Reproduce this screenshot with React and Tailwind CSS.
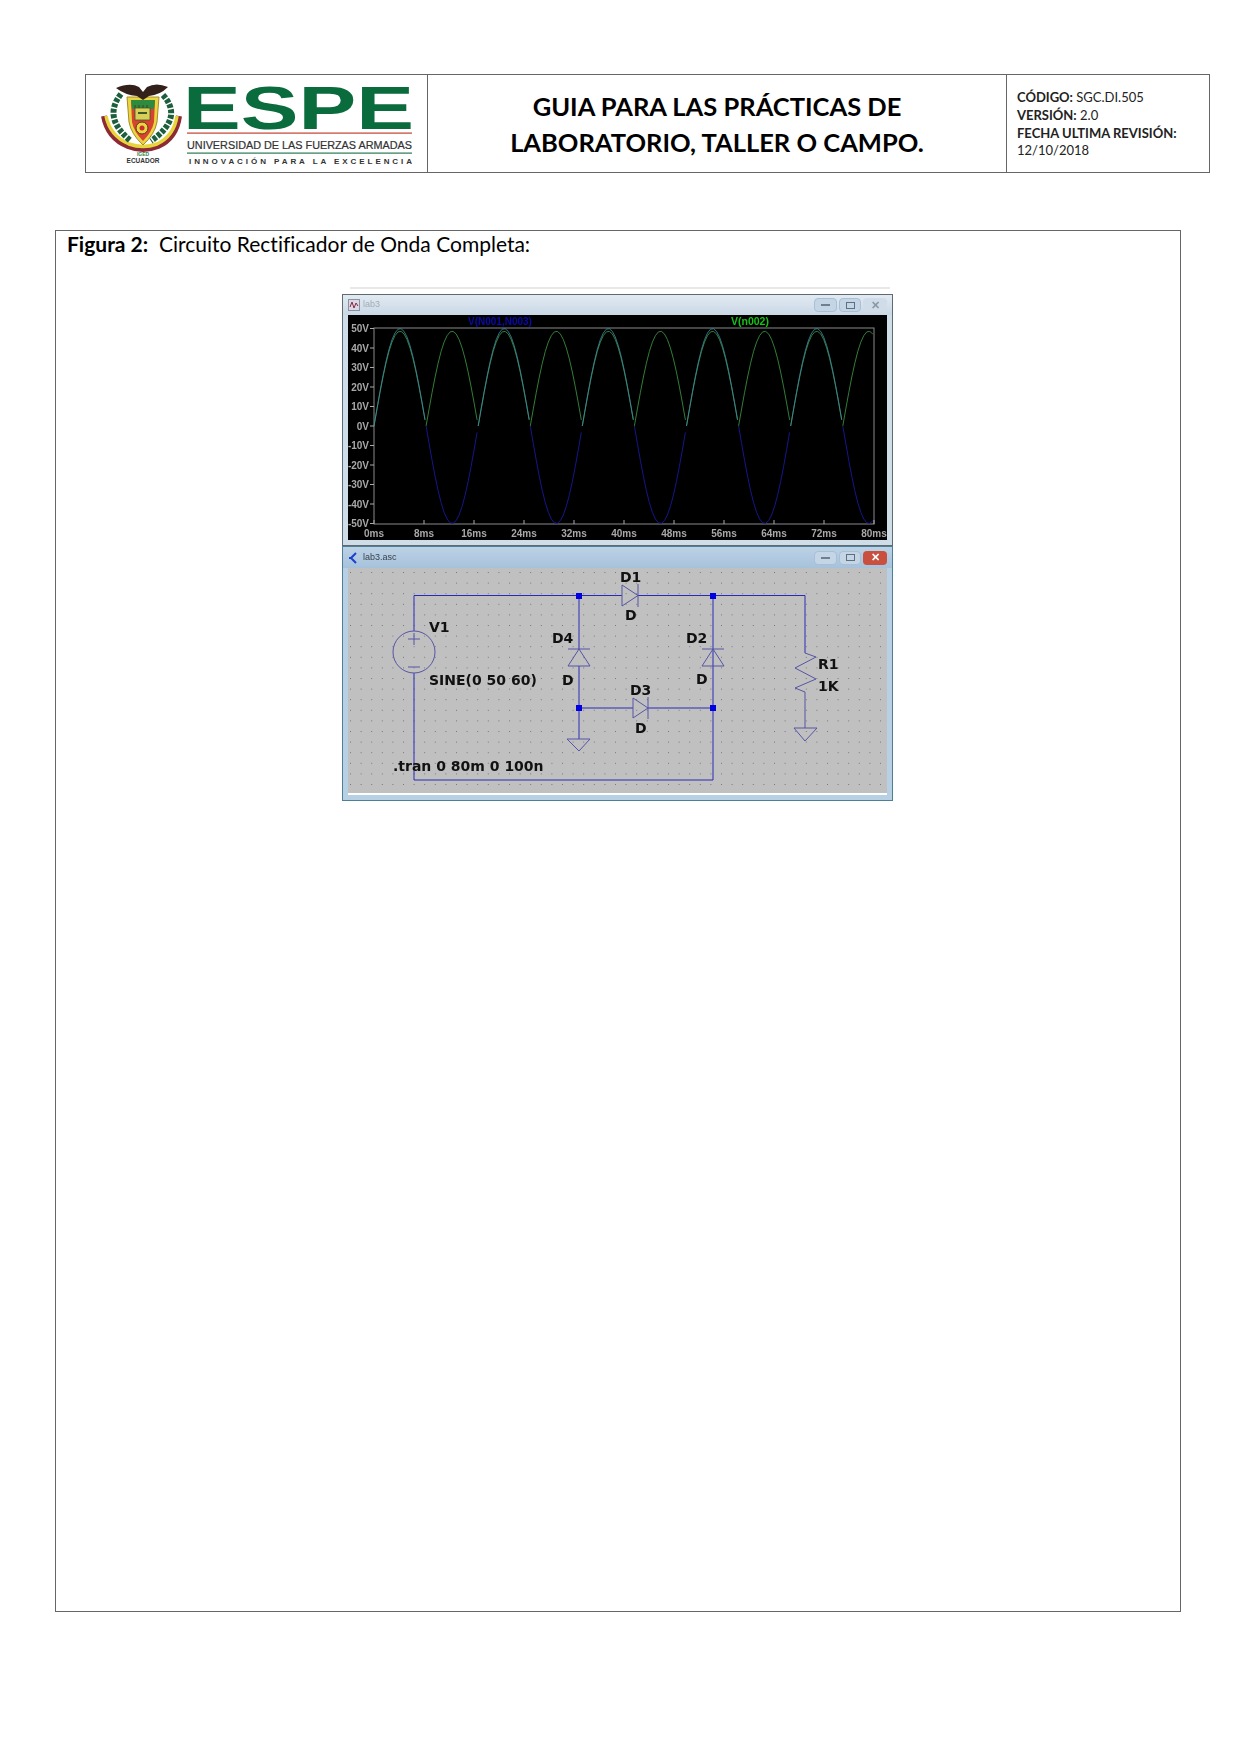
import React from "react";

const bodyFont = "[font-family:Lato,'Open_Sans',sans-serif] [font-variant-ligatures:none]";

// schematic + plot share page coordinates in their viewBox, easier to compare
const PLOT_X = 374;
const PLOT_W = 500;
const ZERO_Y = 425;
const PX_PER_VOLT = 1.95;
const PERIOD_PX = (1000 / 60) * (PLOT_W / 80);

function wavePath(fn, from = 0, to = PLOT_W, step = 3) {
  let d = "";
  for (let x = from; x <= to; x += step) {
    const y = ZERO_Y - fn(x) * PX_PER_VOLT;
    d += `${d ? "L" : "M"}${(PLOT_X + x).toFixed(1)} ${y.toFixed(1)}`;
  }
  return d;
}

const sine = (x) => Math.sin((2 * Math.PI * x) / PERIOD_PX);

const yLabels = [50, 40, 30, 20, 10, 0, -10, -20, -30, -40, -50];
const xLabels = [0, 8, 16, 24, 32, 40, 48, 56, 64, 72, 80];

function Plot() {
  const halves = [];
  for (let i = 0; i < 10; i++) {
    const from = (i * PERIOD_PX) / 2;
    const to = Math.min(((i + 1) * PERIOD_PX) / 2, PLOT_W);
    if (from < PLOT_W) halves.push({ i, from, to });
  }
  return (
    <svg viewBox="348 314 539 225" width="539" height="225" className="block">
      <rect x="348" y="314" width="539" height="225" fill="#000" />
      <rect x={PLOT_X} y="327" width={PLOT_W} height="196" fill="none" stroke="#8a8a8a" strokeWidth="1" />
      {yLabels.map((v) => {
        const y = ZERO_Y - v * PX_PER_VOLT;
        return (
          <g key={v}>
            <line x1="370" x2={PLOT_X} y1={y} y2={y} stroke="#aaa" />
            <text x="369" y={y + 3.5} textAnchor="end" fontFamily="Liberation Sans" fontWeight="700" fontSize="10" fill="#a8a8a8">
              {v}V
            </text>
          </g>
        );
      })}
      {xLabels.map((v) => {
        const x = PLOT_X + (v / 80) * PLOT_W;
        return (
          <g key={v}>
            <line x1={x} x2={x} y1="519" y2="523" stroke="#aaa" />
            <text x={x} y="536" textAnchor="middle" fontFamily="Liberation Sans" fontWeight="700" fontSize="10" fill="#a8a8a8">
              {v}ms
            </text>
          </g>
        );
      })}
      {halves.map(({ i, from, to }) => (
        <path
          key={`g${i}`}
          d={wavePath((x) => Math.abs(sine(x + 0.01)) * 48.6, from, to)}
          fill="none"
          stroke="#3f9d45"
          strokeWidth="0.8"
        />
      ))}
      {halves.map(({ i, from, to }) =>
        i % 2 === 0 ? (
          <path key={`b${i}`} d={wavePath((x) => Math.max(sine(x) * 50, 0), from, to)} fill="none" stroke="#3b8aa8" strokeWidth="0.8" />
        ) : (
          <path key={`b${i}`} d={wavePath((x) => Math.min(sine(x) * 50, 0), from, to)} fill="none" stroke="#16168c" />
        ),
      )}
      <text x="468" y="324" fontFamily="Liberation Sans" fontWeight="700" fontSize="10" fill="#0a0aa8">
        V(N001,N003)
      </text>
      <text x="731" y="324" fontFamily="Liberation Sans" fontWeight="700" fontSize="10.5" fill="#14c414">
        V(n002)
      </text>
    </svg>
  );
}

function Diode({ d, bar }) {
  return (
    <g fill="none" stroke="#5555a5" strokeWidth="1">
      <path d={d} />
      <path d={bar} />
    </g>
  );
}

function Label({ x, y, children }) {
  return (
    <text x={x} y={y} fontFamily="DejaVu Sans" fontWeight="700" fontSize="14" fill="#111">
      {children}
    </text>
  );
}

function Schematic() {
  const wire = "#2a2ab8";
  return (
    <svg viewBox="348 568 539 225" width="539" height="225" className="block">
      <defs>
        <pattern id="dots" x="350" y="572" width="10.6" height="10.6" patternUnits="userSpaceOnUse">
          <rect width="1" height="1" fill="#777" />
        </pattern>
      </defs>
      <rect x="348" y="568" width="539" height="225" fill="#c0c0c0" />
      <rect x="348" y="568" width="539" height="225" fill="url(#dots)" />

      <g fill="none" stroke={wire} strokeWidth="1">
        <path d="M414 631V595.5H622M638 595.5H805V653" />
        <path d="M414 673V780H713V595.5" />
        <path d="M579 595.5V649M579 666V739" />
        <path d="M579 708H633M648 708H713" />
        <path d="M805 692V728" stroke="#5555a5" />
      </g>
      {[
        [579, 596],
        [713, 596],
        [579, 708],
        [713, 708],
      ].map(([x, y]) => (
        <rect key={`${x}-${y}`} x={x - 3} y={y - 3} width="6" height="6" fill="#0000e0" />
      ))}

      <g fill="none" stroke="#5555a5" strokeWidth="1">
        <circle cx="414" cy="652" r="21" />
        <path d="M408 639H420M414 633V645M408 667H420" />
        <path d="M805 653L816 657L795 668L816 679L795 688L805 692" />
        <path d="M567 739H590L579 751Z" />
        <path d="M794 728H817L805 741Z" />
      </g>
      <Diode d="M622 585L638 595.5L622 606Z" bar="M638 584V607" />
      <Diode d="M633 698L648 708L633 718Z" bar="M648 697V719" />
      <Diode d="M579 649L590 666H568Z" bar="M568 649H590" />
      <Diode d="M713 649L724 666H702Z" bar="M702 649H724" />

      <Label x="429" y="632">V1</Label>
      <Label x="429" y="685">SINE(0 50 60)</Label>
      <Label x="393" y="771">.tran 0 80m 0 100n</Label>
      <Label x="552" y="643">D4</Label>
      <Label x="562" y="685">D</Label>
      <Label x="620" y="582">D1</Label>
      <Label x="625" y="620">D</Label>
      <Label x="686" y="643">D2</Label>
      <Label x="696" y="684">D</Label>
      <Label x="630" y="695">D3</Label>
      <Label x="635" y="733">D</Label>
      <Label x="818" y="669">R1</Label>
      <Label x="818" y="691">1K</Label>
    </svg>
  );
}

function WindowButtons({ active }) {
  return (
    <div className="flex gap-[2px]">
      <div className="w-[23px] h-[14px] rounded-sm border border-[#a9bfd4] bg-[#c4d5e6] flex items-center justify-center">
        <div className="w-[9px] h-[2px] bg-[#6f7f90]" />
      </div>
      <div className="w-[22px] h-[14px] rounded-sm border border-[#a9bfd4] bg-[#c4d5e6] flex items-center justify-center">
        <div className="w-[9px] h-[7px] border border-[#5f6f80]" />
      </div>
      <div
        className={`w-[24px] h-[14px] rounded-sm flex items-center justify-center text-[11px] leading-none font-bold ${
          active ? "bg-[#c9503f] text-white" : "bg-[#d0dce8] text-[#8a98a6]"
        }`}
      >
        ✕
      </div>
    </div>
  );
}

function Screenshot() {
  return (
    <div className="w-[551px] ml-[286px] mt-[30px] blur-[0.35px] [font-family:'Liberation_Sans',sans-serif]">
      <div className="ml-[8px] w-[540px] h-[2px] bg-[#e8e8e8] mb-[5px]" />
      <div className="border border-[#5f6b70] bg-[#cfdde9] px-[5px] pb-[5px]">
        <div className="h-[20px] -mx-[5px] px-[5px] flex items-center justify-between bg-linear-to-b from-[#e2eaf2] to-[#c9d8e6]">
          <div className="flex items-center gap-[3px]">
            <svg viewBox="0 0 12 12" width="12" height="12">
              <rect x="0.5" y="0.5" width="11" height="11" fill="#d8d8e8" stroke="#444" strokeDasharray="1 1" />
              <path d="M2 8L4 3L6 9L8 4L10 7" fill="none" stroke="#8a2a3a" strokeWidth="1" />
            </svg>
            <span className="text-[9px] text-[#a4acb4]">lab3</span>
          </div>
          <WindowButtons />
        </div>
        <Plot />
      </div>
      <div className="border border-[#4f7f96] bg-[#b8d0e4] px-[5px] pb-[5px]">
        <div className="h-[21px] -mx-[5px] px-[5px] flex items-center justify-between bg-linear-to-b from-[#bcd2e6] to-[#a6c2db]">
          <div className="flex items-center gap-[3px]">
            <svg viewBox="0 0 12 12" width="12" height="12">
              <path d="M8 1L3 6L8 11M3 6H1" fill="none" stroke="#1d3fd0" strokeWidth="2" />
            </svg>
            <span className="text-[9px] text-[#38424c]">lab3.asc</span>
          </div>
          <WindowButtons active />
        </div>
        <div className="border-b-2 border-white">
          <Schematic />
        </div>
      </div>
    </div>
  );
}

function Crest() {
  return (
    <g>
      {/* outer ribbon */}
      <path d="M104 116Q108 138 128 146Q143 152 158 146Q176 138 179 116" fill="none" stroke="#8c2a35" strokeWidth="6" />
      <path d="M106 116Q110 136 129 144Q143 149 157 144Q174 136 177 116" fill="none" stroke="#e8d53c" strokeWidth="3.5" />
      {/* laurels */}
      <path d="M121 94Q102 118 131 141" fill="none" stroke="#1d5f3c" strokeWidth="6" strokeDasharray="4 1.5" />
      <path d="M163 95Q184 118 151 141" fill="none" stroke="#1d5f3c" strokeWidth="6" strokeDasharray="4 1.5" />
      {/* shield */}
      <path d="M127 97H159L157 122Q155 134 143 145Q131 134 129 122Z" fill="#e9d640" stroke="#a68b2a" strokeWidth="1" />
      <path d="M131 100H155L154 122Q152 132 143 141Q134 132 132 122Z" fill="#d8432f" />
      <path d="M131 100H155L154 109H132Z" fill="#2e8a3f" />
      <path d="M135 108H150V120H135Z" fill="#d9cf58" stroke="#3a5a2a" strokeWidth="0.8" />
      <path d="M135 105V108M139 105V108M143 105V108M147 105V108" stroke="#3a5a2a" strokeWidth="1.5" />
      <path d="M138 113H147" stroke="#3a5a2a" strokeWidth="2" />
      <circle cx="142" cy="128" r="6" fill="#e9d640" stroke="#5a3a20" strokeWidth="1" />
      <circle cx="142" cy="128" r="2.5" fill="#c9302a" />
      {/* eagle */}
      <path d="M116 88Q130 82 139 87L143 92L147 87Q156 82 168 87Q160 95 149 96L143 100L137 96Q125 95 116 88Z" fill="#33201a" />
      <text x="143" y="156" textAnchor="middle" fontFamily="Liberation Sans" fontWeight="700" fontSize="5" fill="#3c7a4a">
        IGED
      </text>
      <text x="143" y="163" textAnchor="middle" fontFamily="Liberation Sans" fontWeight="700" fontSize="6.5" fill="#333">
        ECUADOR
      </text>
    </g>
  );
}

function Logo() {
  return (
    <svg viewBox="86 75 340 97" width="340" height="97" className="block">
      <Crest />
      <text
        x="183"
        y="129"
        textLength="231"
        lengthAdjust="spacingAndGlyphs"
        fontFamily="Liberation Sans"
        fontWeight="700"
        fontSize="61"
        fill="#0a6b3d"
      >
        ESPE
      </text>
      <rect x="187" y="132.5" width="225" height="1.2" fill="#c4402f" />
      <text x="187" y="149" textLength="225" lengthAdjust="spacingAndGlyphs" fontFamily="Liberation Sans" fontSize="10" fill="#333" stroke="#333" strokeWidth="0.2">
        UNIVERSIDAD DE LAS FUERZAS ARMADAS
      </text>
      <rect x="187" y="152.5" width="225" height="1.2" fill="#2a7a52" />
      <text x="189" y="164" textLength="223" fontFamily="Liberation Sans" fontWeight="700" fontSize="8" fill="#333">
        INNOVACIÓN  PARA LA EXCELENCIA
      </text>
    </svg>
  );
}

export default function App() {
  return (
    <div className={`w-[1241px] h-[1755px] bg-white pt-[74px] text-black ${bodyFont}`}>
      <div className="ml-[85px] w-[1125px] h-[99px] flex border border-[#666]">
        <div className="w-[342px] shrink-0 border-r border-[#666]">
          <Logo />
        </div>
        <div className="flex-1 flex flex-col items-center justify-center text-[25.5px] leading-[36px] font-bold">
          <span>GUIA PARA LAS PRÁCTICAS DE</span>
          <span>LABORATORIO, TALLER O CAMPO.</span>
        </div>
        <div className="w-[203px] shrink-0 border-l border-[#666] pl-[10px] pt-[14px] text-[13px] leading-[17.8px] text-[#222]">
          <p>
            <b>CÓDIGO:</b> SGC.DI.505
          </p>
          <p>
            <b>VERSIÓN:</b> 2.0
          </p>
          <p>
            <b>FECHA ULTIMA REVISIÓN:</b>
          </p>
          <p>12/10/2018</p>
        </div>
      </div>

      <div className="mt-[57px] ml-[55px] w-[1126px] h-[1382px] border border-[#666]">
        <p className="pl-[11px] text-[21px] leading-[26px] whitespace-pre">
          <b>Figura 2:</b>
          {"  "}Circuito Rectificador de Onda Completa:
        </p>
        <Screenshot />
      </div>
    </div>
  );
}
